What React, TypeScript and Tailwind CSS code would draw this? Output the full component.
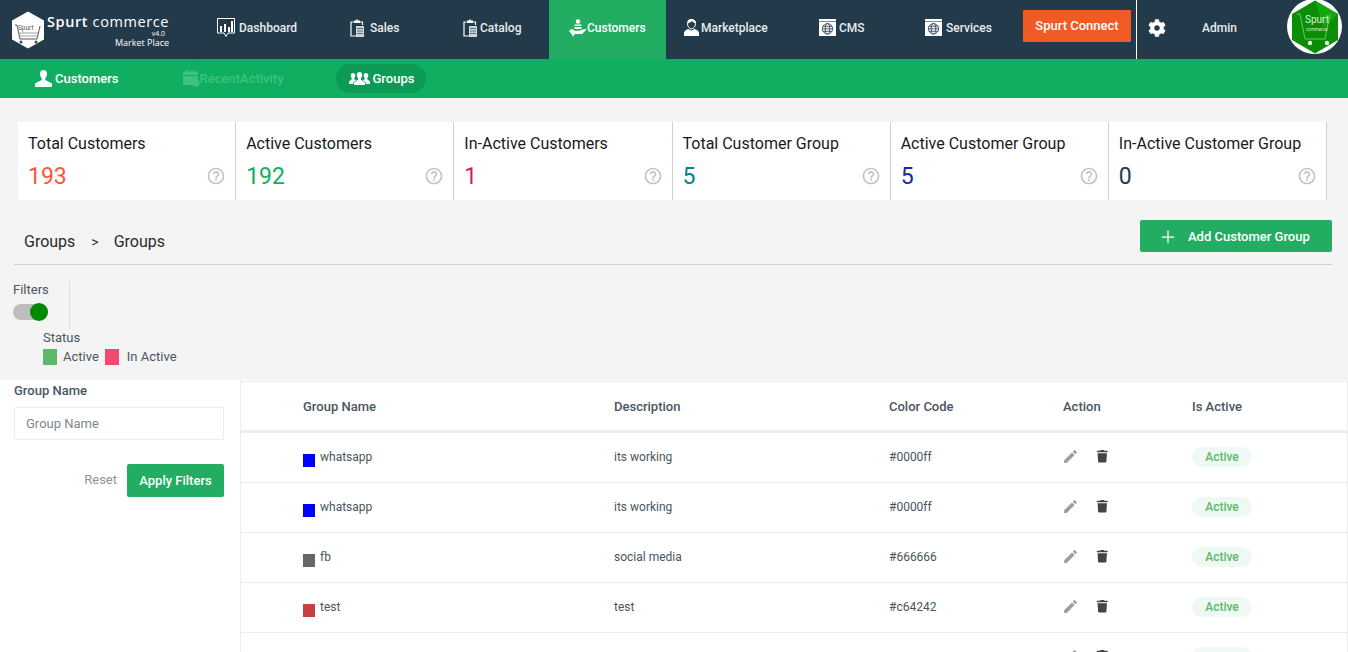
import { ReactNode } from "react";
import { FaCog, FaTrash } from "react-icons/fa";
import { MdEdit, MdHelpOutline } from "react-icons/md";
import { Plus } from "lucide-react";

const DashboardIcon = () => (
  <svg width="18" height="20" viewBox="0 0 18 20" className="shrink-0">
    <path d="M.5.5h17v14.500h-6.500L9 18.500 7 15H.5z" fill="none" stroke="#fff" />
    <path d="M3 8h2v6H3zM7 6h2v8H7zM11 9h2v5h-2zM14 3h2v11h-2z" fill="#fff" />
  </svg>
);

const ClipboardIcon = () => (
  <svg width="14" height="18" viewBox="0 0 14 18" className="shrink-0">
    <path d="M3.500 3H1v14h5M10 3h2.500v3" fill="none" stroke="#fff" strokeWidth="1.200" />
    <path d="M4 1.500h2l.5-1h1l.5 1h2V4H4z" fill="#fff" />
    <path d="M6 7h8v11H6z" fill="#cfd6da" />
    <path d="M7 9.500h6M7 12h6M7 14.500h6" stroke="#233a4b" strokeWidth=".7" />
  </svg>
);

const CustomersIcon = () => (
  <svg width="18" height="18" viewBox="0 0 18 18" className="shrink-0">
    <circle cx="9" cy="2.500" r="2.200" fill="#fff" />
    <path d="M5.500 5.500h7V7h-7zM5.500 8h7v2h-7z" fill="#fff" />
    <path d="M0 11.500l3.500-1.500 2 1.800h5l5-1.800 2 .6-4.500 4.400H6l-2 2.500z" fill="#fff" />
  </svg>
);

const AgentIcon = () => (
  <svg width="15" height="17" viewBox="0 0 15 17" className="shrink-0">
    <path d="M7.500.500c2.600 0 4 1.600 4 4.200 0 2.700-1.700 5-4 5s-4-2.300-4-5C3.500 2.100 4.900.500 7.500.500z" fill="#233a4b" stroke="#fff" />
    <path d="M3.500 4.500c2-.5 3.500-1.500 4.500-2.500 1 1.200 2 2 3.500 2.500V2L8 0 4 1z" fill="#fff" />
    <path d="M0 17v-3c0-2 2.500-3.500 4.500-4l3 1.500 3-1.500c2 .5 4.500 2 4.500 4v3z" fill="#fff" />
  </svg>
);

const GlobeIcon = () => (
  <svg width="17" height="17" viewBox="0 0 17 17" className="shrink-0">
    <path d="M0 0h17v17H0z" fill="#fff" />
    <path d="M0 2.500h17" stroke="#233a4b" strokeWidth=".6" />
    <g fill="none" stroke="#233a4b" strokeWidth=".8">
      <circle cx="8.500" cy="9.800" r="5.200" />
      <ellipse cx="8.500" cy="9.800" rx="2.300" ry="5.200" />
      <path d="M3.300 9.800h10.400M4 7.300h9M4 12.300h9" />
    </g>
  </svg>
);

const CalendarIcon = () => (
  <svg width="17" height="17" viewBox="0 0 17 17" className="shrink-0" fill="#3cc283">
    <path d="M0 1.500h15v3.500H0zM3 0h1.500v2H3zM10.500 0H12v2h-1.500z" />
    <path d="M0 6h15v4.500a5 5 0 0 0-4.500 4.500H0z" />
    <circle cx="13" cy="13" r="3.600" />
  </svg>
);

const BustIcon = () => (
  <svg width="17" height="17" viewBox="0 0 17 17" className="shrink-0">
    <path d="M8.500 0c2.300 0 3.500 1.500 3.500 3.700 0 1.700-.7 3.300-1.700 4.300v2l6.700 3.500V17H0v-3.500L6.700 10V8C5.700 7 5 5.400 5 3.700 5 1.500 6.200 0 8.500 0z" fill="#fff" />
  </svg>
);

const GroupIcon = () => (
  <svg width="21" height="13" viewBox="0 0 21 13" className="shrink-0" fill="#fff">
    <path d="M4 1c1.500 0 2.300 1 2.300 2.400 0 1-.4 2-1 2.600v1.300l2 1-3 2V12H0V9.500l2.700-2.200V6c-.6-.6-1-1.600-1-2.600C1.700 2 2.500 1 4 1z" />
    <path d="M17 1c-1.500 0-2.300 1-2.300 2.400 0 1 .4 2 1 2.600v1.300l-2 1 3 2V12H21V9.500l-2.700-2.200V6c.6-.6 1-1.600 1-2.600C19.300 2 18.500 1 17 1z" />
    <path d="M10.500 0c1.700 0 2.700 1.200 2.700 2.900 0 1.200-.5 2.300-1.200 3v1.800l4 2.800V13H5v-2.500l4-2.800V5.900C8.300 5.200 7.800 4.100 7.800 2.900 7.800 1.200 8.800 0 10.500 0z" />
  </svg>
);

const Logo = () => (
  <svg width="36" height="38" viewBox="0 0 36 38" className="shrink-0">
    <path d="M18 .500l16 9v19l-16 9-16-9v-19z" fill="#fff" />
    <path d="M5 14h2l3 14h17l3-13" fill="none" stroke="#555" strokeWidth="1" />
    <circle cx="11" cy="31" r="1.500" fill="#444" />
    <circle cx="26" cy="31" r="1.500" fill="#444" />
    <text x="8" y="19" fontSize="6.500" fill="#555" fontFamily="Roboto, sans-serif">Spurt</text>
    <path d="M8 22h20M9 25h18" stroke="#888" strokeWidth=".8" />
  </svg>
);

const Avatar = () => (
  <div className="w-[55px] h-[55px] rounded-full bg-white flex items-center justify-center mt-[-1px]">
    <svg width="50" height="54" viewBox="0 0 50 54">
      <path d="M25 .500l23 13.500v26L25 53.500 2 40V14z" fill="#0b8d07" />
      <path d="M25 .500l23 13.500-14 14z" fill="#12a80c" />
      <path d="M7 14h3l5 25h20l5-25" fill="none" stroke="#7fd67b" strokeWidth=".8" />
      <circle cx="20" cy="43" r="2.200" fill="#dff5de" />
      <circle cx="37" cy="43" r="2.200" fill="#dff5de" />
      <text x="15" y="23" fontSize="10" fill="#d8f3d6" fontFamily="Roboto, sans-serif">Spurt</text>
      <text x="16" y="31" fontSize="4.500" fill="#d8f3d6" fontFamily="Roboto, sans-serif">commerce</text>
    </svg>
  </div>
);

const NavItem = ({ icon, label, className }: { icon: ReactNode; label: string; className: string }) => (
  <div className={`h-full flex items-center pb-[4px] text-[12px] font-medium text-[#e8ecee] ${className}`}>
    {icon}
    <span>{label}</span>
  </div>
);

const stats = [
  { label: "Total Customers", value: "193", color: "text-[#ff5436]" },
  { label: "Active Customers", value: "192", color: "text-[#10ae61]" },
  { label: "In-Active Customers", value: "1", color: "text-[#d81b60]" },
  { label: "Total Customer Group", value: "5", color: "text-[#00838f]" },
  { label: "Active Customer Group", value: "5", color: "text-[#0d2ea0]" },
  { label: "In-Active Customer Group", value: "0", color: "text-[#233a4b]" },
];

const rows = [
  { name: "whatsapp", desc: "its working", code: "#0000ff", swatch: "bg-[#0000ff]" },
  { name: "whatsapp", desc: "its working", code: "#0000ff", swatch: "bg-[#0000ff]" },
  { name: "fb", desc: "social media", code: "#666666", swatch: "bg-[#666666]" },
  { name: "test", desc: "test", code: "#c64242", swatch: "bg-[#c64242]" },
  { name: "", desc: "", code: "", swatch: "" },
];

export default function App() {
  return (
    <div className="h-[652px] overflow-hidden bg-[#f4f4f4] text-[#3e4a56] font-['Roboto',sans-serif]">
      <header className="h-[59px] bg-[#233a4b] flex">
        <div className="w-[198px] border-r border-[#1e3342] flex items-center pl-[10px]">
          <Logo />
          <div className="text-white ml-[1px] mt-[3px] leading-none font-['Open_Sans',sans-serif]">
            <div className="text-[14.500px] leading-[18px] tracking-[.6px] whitespace-nowrap"><span className="font-semibold">Spurt</span> commerce</div>
            <div className="text-[7px] text-right leading-[6px] pr-[4px]">v4.0</div>
            <div className="text-[9px] text-right leading-[12px]">Market Place</div>
          </div>
        </div>
        <NavItem icon={<DashboardIcon />} label="Dashboard" className="w-[132px] pl-[19px] gap-[4px]" />
        <NavItem icon={<ClipboardIcon />} label="Sales" className="w-[117px] pl-[20px] gap-[6px]" />
        <NavItem icon={<ClipboardIcon />} label="Catalog" className="w-[102px] pl-[16px] gap-[3px]" />
        <NavItem icon={<CustomersIcon />} label="Customers" className="w-[117px] pl-[20px] bg-[#22ad63] text-white" />
        <NavItem icon={<AgentIcon />} label="Marketplace" className="w-[135px] pl-[18px] gap-[2px]" />
        <NavItem icon={<GlobeIcon />} label="CMS" className="w-[106px] pl-[18px] gap-[3px]" />
        <NavItem icon={<GlobeIcon />} label="Services" className="w-[116px] pl-[18px] gap-[4px]" />
        <div className="w-[114px] flex items-start pt-[10px] border-r border-white">
          <div className="w-[108px] h-[32px] bg-[#f15a22] rounded-[1px] flex items-center justify-center text-white text-[13px] font-medium">
            Spurt Connect
          </div>
        </div>
        <div className="flex items-center pb-[4px] pl-[11px] w-[65px]">
          <FaCog className="text-white text-[18px]" />
        </div>
        <div className="flex items-center pb-[4px] text-[12px] font-medium text-[#e8ecee] w-[85px]">Admin</div>
        <Avatar />
      </header>

      <nav className="h-[39px] bg-[#10ae61] flex items-center text-[13px] font-medium text-white">
        <div className="flex items-center ml-[35px] gap-[3px]">
          <BustIcon />
          <span>Customers</span>
        </div>
        <div className="flex items-center ml-[64px] text-[#3cc283]">
          <CalendarIcon />
          <span>RecentActivity</span>
        </div>
        <div className="flex items-center ml-[52px] h-[29px] pl-[13px] pr-[12px] gap-[3px] rounded-full bg-[#0c9a55]">
          <GroupIcon />
          <span>Groups</span>
        </div>
      </nav>

      <section className="mt-[24px] ml-[18px] w-[1309px] h-[78px] bg-white grid grid-cols-6">
        {stats.map((s) => (
          <div key={s.label} className="border-r border-[#cfcfcf] px-[10px] pt-[12px] relative">
            <div className="text-[16px] leading-[19px] text-[#1a1a1a] whitespace-nowrap">{s.label}</div>
            <div className={`text-[23px] leading-[28px] mt-[10px] ${s.color}`}>{s.value}</div>
            <MdHelpOutline className="absolute right-[9px] top-[44px] text-[20px] text-[#c4c4c4]" />
          </div>
        ))}
      </section>

      <div className="mt-[20px] ml-[14px] mr-[16px] h-[45px] border-b border-[#cfcfcf] flex items-start justify-between">
        <div className="pl-[10px] pt-[12px] flex items-center text-[16px] leading-[20px] text-[#2a2a2a]">
          <span>Groups</span>
          <span className="ml-[16px] mr-[15px] text-[14px] text-[#233a4b]">&gt;</span>
          <span>Groups</span>
        </div>
        <div className="w-[192px] h-[32px] bg-[#22ad63] rounded-[2px] flex items-center pt-[1px] text-white text-[13px] font-medium pl-[18px]">
          <Plus size={20} strokeWidth={1.500} />
          <span className="ml-[10px]">Add Customer Group</span>
        </div>
      </div>

      <div className="h-[115px] relative text-[13px] text-[#4a5560]">
        <div className="absolute left-[13px] top-[16px] w-[57px] h-[48px] border-r border-[#dcdcdc]">
          <div className="leading-[18px]">Filters</div>
          <div className="relative mt-[5px] w-[35px] h-[16px] rounded-full bg-[#bdbdbd]">
            <span className="absolute right-0 top-[-1px] w-[18px] h-[18px] rounded-full bg-[#008a00]" />
          </div>
        </div>
        <div className="absolute left-[43px] top-[64px]">
          <div className="leading-[18px]">Status</div>
          <div className="flex items-center mt-[2px] leading-[16px]">
            <span className="w-[14px] h-[16px] bg-[#5cb86b]" />
            <span className="ml-[6px]">Active</span>
            <span className="ml-[6px] w-[14px] h-[16px] bg-[#f44a6e]" />
            <span className="ml-[8px]">In Active</span>
          </div>
        </div>
      </div>

      <div className="flex bg-white h-[272px]">
        <aside className="w-[241px] shrink-0 border-r border-[#ededed] pl-[14px] pr-[16px]">
          <div className="text-[13px] font-medium leading-[20px] mt-[1px] text-[#4a5560]">Group Name</div>
          <div className="mt-[6px] h-[33px] border border-[#ececec] rounded-[2px] flex items-center pl-[11px] pt-[1px] text-[13px] text-[#7d8790]">
            Group Name
          </div>
          <div className="flex items-center justify-end mt-[24px]">
            <span className="text-[13px] text-[#8d9399] mb-[1px]">Reset</span>
            <div className="ml-[10px] w-[97px] h-[33px] bg-[#22ad63] rounded-[2px] flex items-center justify-center pt-[1px] text-white text-[13px] font-medium">
              Apply Filters
            </div>
          </div>
        </aside>
        <div className="flex-1 min-w-0 border-t border-r border-[#ededed] mt-[1px]">
          <div className="grid grid-cols-[311px_275px_174px_129px_1fr] items-center h-[51px] pt-[2px] border-b-[3px] border-[#ededed] text-[13px] font-medium text-[#4a5560] pl-[62px]">
            <span>Group Name</span>
            <span>Description</span>
            <span>Color Code</span>
            <span>Action</span>
            <span>Is Active</span>
          </div>
          {rows.map((r, i) => (
            <div key={i} className="grid grid-cols-[311px_275px_174px_129px_1fr] items-center h-[50px] pb-[2px] border-b border-[#ededed] pl-[62px] text-[12px] text-[#4a5560]">
              <div className="flex items-start h-[18px]">
                <span className={`w-[12px] h-[13px] mt-[6px] ${r.swatch}`} />
                <span className="ml-[5px] mt-[2px] leading-[14px]">{r.name}</span>
              </div>
              <span>{r.desc}</span>
              <span>{r.code}</span>
              <div className="flex items-center ml-[-1px]">
                <MdEdit className="text-[17px] text-[#9e9e9e]" />
                <FaTrash className="ml-[17px] text-[12.500px] text-[#444]" />
              </div>
              <div>
                <span className="inline-flex items-center justify-center w-[60px] h-[20px] rounded-full bg-[#edf9f2] text-[#5cb86b] font-medium">
                  Active
                </span>
              </div>
            </div>
          ))}
        </div>
      </div>
    </div>
  );
}
